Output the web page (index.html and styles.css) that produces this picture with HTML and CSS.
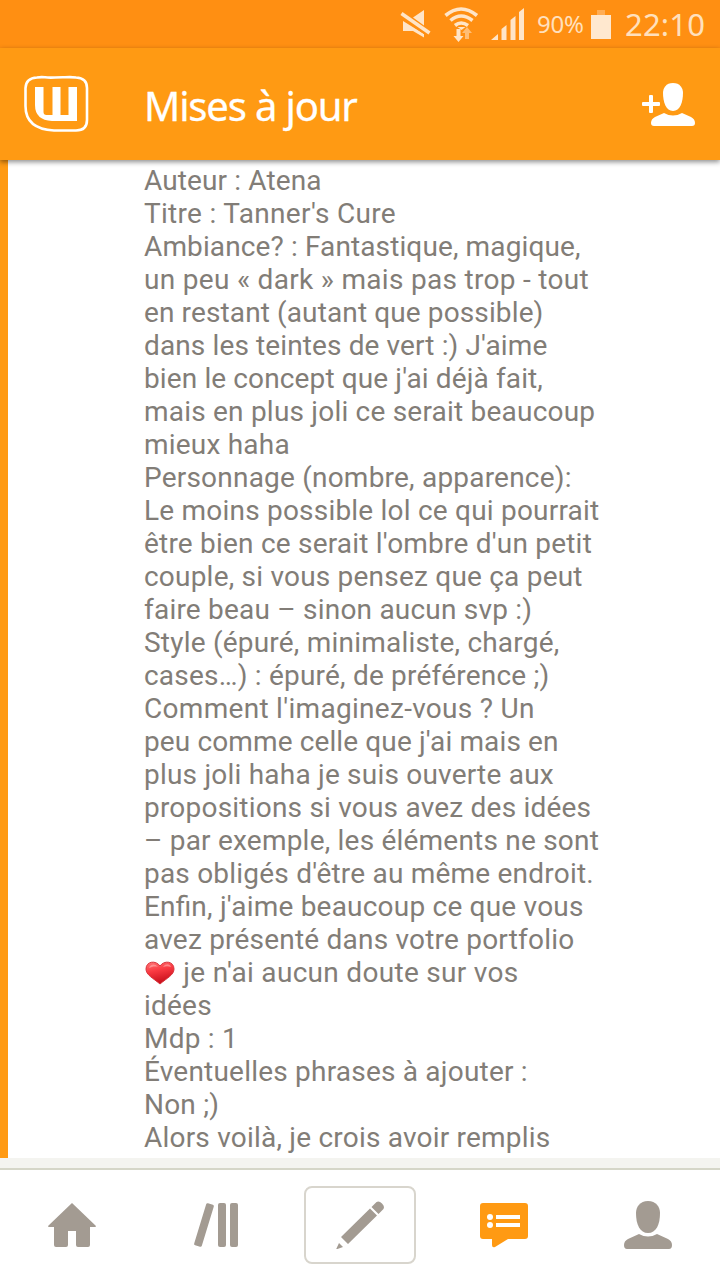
FILE: index.html
```html
<!DOCTYPE html>
<html lang="fr">
<head>
<meta charset="utf-8">
<title>Mises à jour</title>
<link rel="stylesheet" href="styles.css">
</head>
<body>
<div class="screen">
  <div class="status">
    <svg class="status-icons" width="136" height="48" viewBox="0 0 136 48" fill="#ffe5c8">
      <path d="M22 17.500 33 10v15.500zM12 21l21 13v3.500L22 31H12z"/>
      <path d="M10.500 13.500 38.500 33" stroke="#ffe5c8" stroke-width="3.600"/>
      <path d="M11 18.500 35 35" stroke="#ff8f12" stroke-width="1"/>
      <g fill="none" stroke="#ffe5c8" stroke-width="3.600">
        <path d="M54.500 15.500Q70 2.500 86 15.500M59.500 20.500Q70 11.500 81.500 20.500M64 25.500Q70 20.500 77 25.500"/>
      </g>
      <path d="M66.500 27h8l-4 3z"/>
      <path d="M65.500 29h4v7h3l-5 6-5-6h3z"/>
      <path d="M74 39v-6h-3l5-6 5 6h-3v6z" fill="#ffbd74"/>
      <path d="M100 40l7-6v6zM110.500 40V29l5-4v15zM119.500 40V20l5-4v24zM128 40V12l5-4v32z"/>
    </svg>
    <span class="percent">90%</span>
    <svg class="battery" width="20" height="30" viewBox="0 0 20 30"><path fill="#ffad55" d="M6 1h8v5H6z"/><path fill="#ffe8cf" d="M0 6h20v24H0z"/></svg>
    <span class="clock">22:10</span>
  </div>
  <header class="bar">
    <svg class="logo" width="66" height="58" viewBox="0 0 66 58">
      <path d="M14 2.500Q18 1.800 22 2.300T32 2.500T42 2.300Q48 1.800 53 2.500Q64 3 64 13V45Q64 55.500 53 55.500H31Q2.500 54 2.500 31V13Q3 3 14 2.500z" fill="none" stroke="#fff" stroke-width="2.600"/>
      <path fill="#fff" d="M12 12h8.500v25q0 3 3 3h6V12h8v28h8V12H54v34H29Q12 45 12 30z"/>
    </svg>
    <h1 class="title">Mises à jour</h1>
    <svg class="add" width="56" height="46" viewBox="0 0 56 46" fill="#fff">
      <path d="M9 15q0-1 1-1h2q1 0 1 1v6h6q1 0 1 1v2q0 1-1 1h-6v6q0 1-1 1h-2q-1 0-1-1v-6H3q-1 0-1-1v-2q0-1 1-1h6z"/>
      <path d="M33 2c7 0 10 5 10 10 0 9-3 18-10 18s-10-9-10-18c0-5 3-10 10-10z"/>
      <path d="M24 32q9 5 18 0l9 4q4 2 4 6 0 3-3 3H14q-3 0-3-3 0-4 4-6z"/>
    </svg>
  </header>
  <main class="feed">
    <div class="message">
      <div class="line snug">Auteur : Atena</div>
      <div class="line loose">Titre : Tanner's Cure</div>
      <div class="line snug">Ambiance? : Fantastique, magique,</div>
      <div class="line loose">un peu « dark » mais pas trop - tout</div>
      <div class="line snug">en restant (autant que possible)</div>
      <div class="line snug">dans les teintes de vert :) J'aime</div>
      <div class="line snug">bien le concept que j'ai déjà fait,</div>
      <div class="line">mais en plus joli ce serait beaucoup</div>
      <div class="line">mieux haha</div>
      <div class="line">Personnage (nombre, apparence):</div>
      <div class="line">Le moins possible lol ce qui pourrait</div>
      <div class="line">être bien ce serait l'ombre d'un petit</div>
      <div class="line">couple, si vous pensez que ça peut</div>
      <div class="line">faire beau – sinon aucun svp :)</div>
      <div class="line">Style (épuré, minimaliste, chargé,</div>
      <div class="line">cases…) : épuré, de préférence ;)</div>
      <div class="line loose">Comment l'imaginez-vous ? Un</div>
      <div class="line snug">peu comme celle que j'ai mais en</div>
      <div class="line">plus joli haha je suis ouverte aux</div>
      <div class="line">propositions si vous avez des idées</div>
      <div class="line">– par exemple, les éléments ne sont</div>
      <div class="line">pas obligés d'être au même endroit.</div>
      <div class="line">En<span class="ligature">fi</span>n, j'aime beaucoup ce que vous</div>
      <div class="line">avez présenté dans votre portfolio</div>
      <div class="line loose"><svg class="heart" width="32" height="26" viewBox="0 0 32 26"><defs><linearGradient id="red" x1="0" y1="0" x2="0.300" y2="1"><stop offset="0" stop-color="#ff7777"/><stop offset=".45" stop-color="#fa3a42"/><stop offset="1" stop-color="#c9101c"/></linearGradient></defs><path d="M16 24C9 18 2 15 2 9 2 1 12 0 16 6c4-6 14-5 14 3 0 6-7 9-14 15z" fill="url(#red)" stroke="#d8343c"/><path d="M5 8c1-4 6-5 9-1-4-1-6 0-9 1zM19 7c3-4 7-3 8 0-3-1-5-1-8 0z" fill="#ffc4c2" opacity=".5"/></svg> je n'ai aucun doute sur vos</div>
      <div class="line">idées</div>
      <div class="line">Mdp : 1</div>
      <div class="line">Éventuelles phrases à ajouter :</div>
      <div class="line">Non ;)</div>
      <div class="line">Alors voilà, je crois avoir remplis</div>
    </div>
  </main>
  <div class="gap"></div>
  <nav class="tabs">
    <div class="tab"><svg width="48" height="48" viewBox="0 0 48 48" fill="#a39b92"><path d="M24 2 48 25q0 1-1 1h-5v18q0 2-2 2H30q-2 0-2-2V30h-8v14q0 2-2 2H8q-2 0-2-2V26H1q-1 0-1-1z"/></svg></div>
    <div class="tab"><svg width="48" height="48" viewBox="0 0 48 48" fill="#a39b92"><rect x="8" y="2" width="8" height="44" rx="1.500" transform="rotate(17 12 24)"/><rect x="26" y="2" width="8" height="44" rx="2"/><rect x="38" y="2" width="8" height="44" rx="2"/></svg></div>
    <div class="tab"><div class="compose"><svg width="48" height="48" viewBox="0 0 48 48" fill="#a39b92"><path d="M5 36 34 7.500 41 14.500 12 43zM35.500 6 39 2.500q3-4 7 0 4 4 0 7L42.500 13zM3 42l4 4-7 2.500z"/></svg></div></div>
    <div class="tab"><svg width="48" height="48" viewBox="0 0 48 48"><path fill="#ff9a13" d="M3 2h42q3 0 3 3v30q0 3-3 3H28L15 46q-3 1-3-2v-6H3q-3 0-3-3V5q0-3 3-3z"/><g fill="#fff"><circle cx="10" cy="16" r="3"/><circle cx="10" cy="24" r="3"/><path d="M16 14h24v4H16zM16 22h24v4H16z"/></g></svg></div>
    <div class="tab"><svg width="48" height="49" viewBox="0 0 48 49" fill="#a39b92"><path d="M24 0c8 0 12 6 12 12 0 12-4 20-12 20s-12-8-12-20C12 6 16 0 24 0z"/><path d="M15 33q9 5 18 0l11 5q4 2 4 6 0 4-3 4H3q-3 0-3-4 0-4 4-6z"/></svg></div>
  </nav>
</div>
</body>
</html>
```
FILE: styles.css
```css
* { box-sizing: border-box; }
body { margin: 0; background: #fff; }
.screen { width: 720px; height: 1280px; overflow: hidden; display: flex; flex-direction: column; }
.status { height: 48px; flex: none; background: #ff8f12; display: flex; align-items: center; padding-left: 391px; color: #ffe0bd; font-family: "Noto Sans", sans-serif; }
.status-icons { flex: none; }
.percent { width: 54px; flex: none; margin-left: 10px; font-size: 24px; letter-spacing: -0.2px; line-height: 48px; }
.battery { flex: none; }
.clock { margin-left: 14px; font-size: 31px; letter-spacing: 0.2px; line-height: 48px; }
.bar { position: relative; z-index: 1; height: 112px; flex: none; display: flex; align-items: center; padding: 0 24px 0 23px; background: #ff9a13; box-shadow: 0 2px 5px rgba(0,0,0,.45); }
.logo { flex: none; }
.title { margin: 3px 0 0 55px; font: 400 40px/56px "Noto Sans", sans-serif; letter-spacing: -1.15px; color: #fff; -webkit-text-stroke: 0.3px #fff; white-space: nowrap; }
.add { margin-left: auto; }
.feed { height: 998px; flex: none; overflow: hidden; border-left: 8px solid #ff9a13; padding: 4px 0 0 136px; background: #fff; }
.message { font-family: Roboto, sans-serif; font-size: 28px; line-height: 33px; letter-spacing: 0.21px; color: #827d77; }
.line { height: 33px; white-space: nowrap; }
.snug { letter-spacing: 0.12px; }
.loose { letter-spacing: 0.3px; }
.ligature { letter-spacing: 0; }
.heart { vertical-align: -4px; }
.gap { height: 10px; flex: none; background: #f4f4f0; }
.tabs { height: 112px; flex: none; display: grid; grid-template-columns: repeat(5, 1fr); border-top: 2px solid #d5d6c8; background: #fff; }
.tab { display: flex; align-items: center; justify-content: center; }
.tab svg { display: block; }
.compose { width: 112px; height: 78px; border: 2px solid #d8d5cd; border-radius: 8px; display: flex; align-items: center; justify-content: center; }
```
